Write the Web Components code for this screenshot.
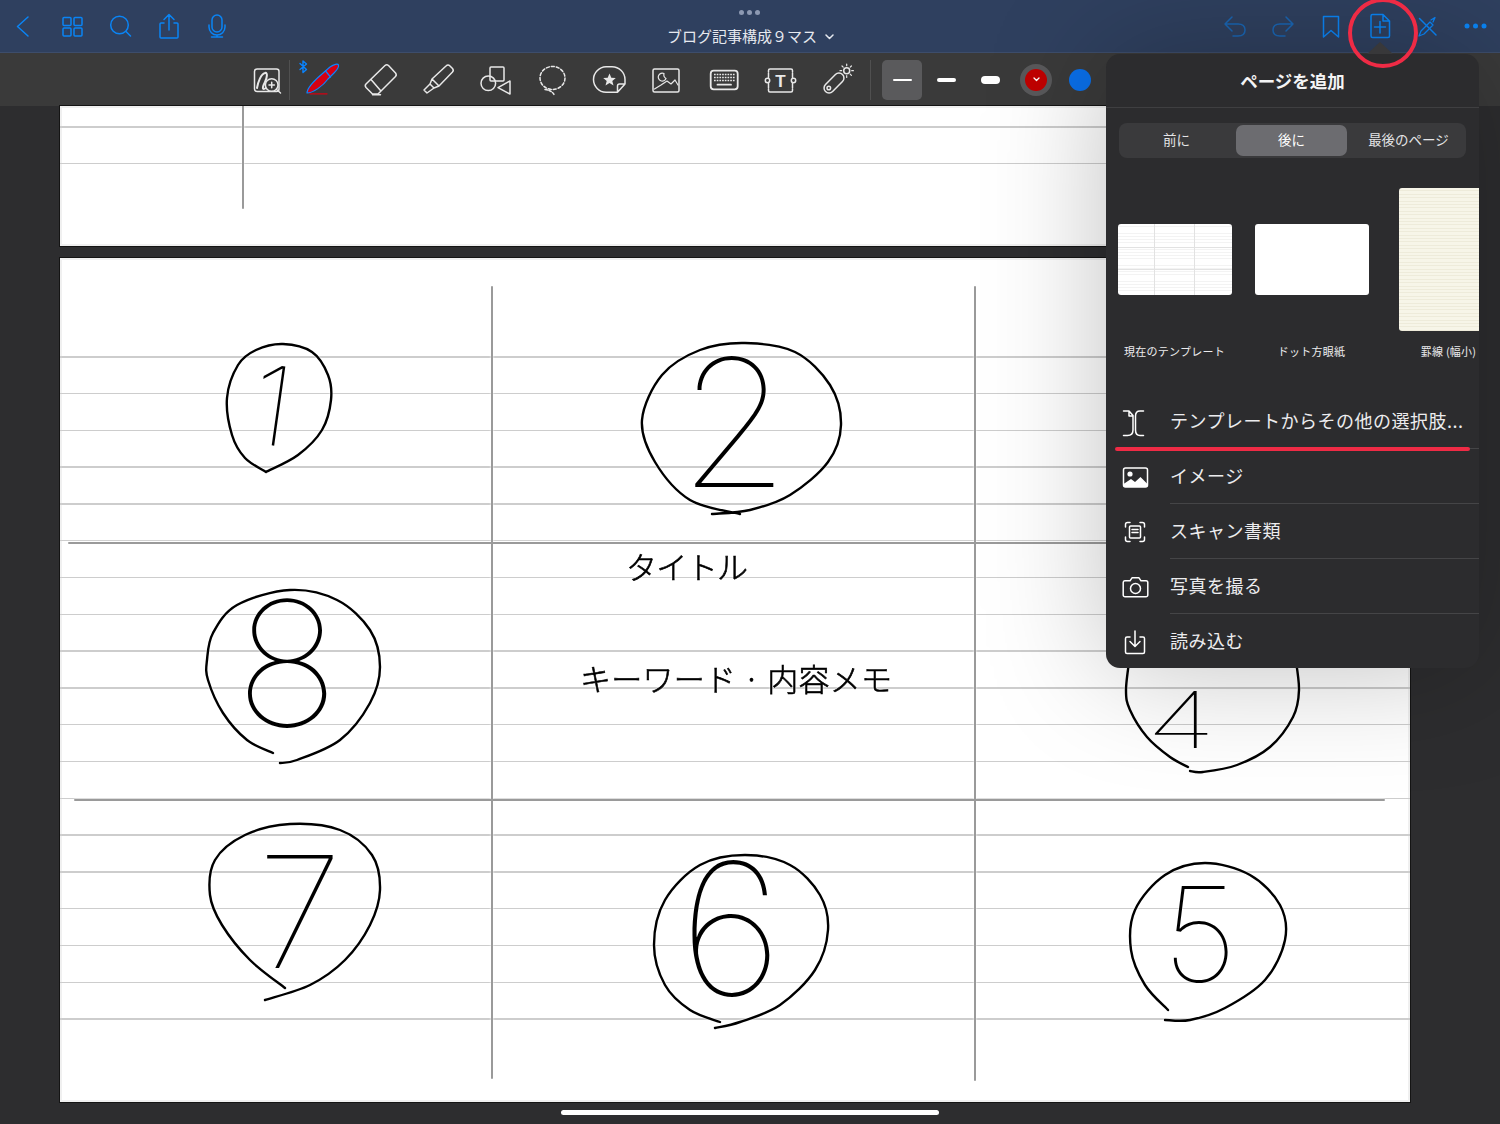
<!DOCTYPE html>
<html lang="ja">
<head>
<meta charset="utf-8">
<title>ブログ記事構成9マス</title>
<style>
  html, body { margin: 0; padding: 0; background: #2d2d2f; }
  body { width: 1500px; height: 1124px; overflow: hidden; font-family: "Noto Sans CJK JP", "Noto Sans", sans-serif; }
</style>
</head>
<body>
<note-app></note-app>
<script>
const ICONS = {
  back: '<path d="M28 17 17.5 26.5 28 36"/>',
  grid: '<rect x="15" y="17.5" width="8" height="8" rx="1"/><rect x="26" y="17.5" width="8" height="8" rx="1"/><rect x="15" y="28" width="8" height="8" rx="1"/><rect x="26" y="28" width="8" height="8" rx="1"/>',
  search: '<circle cx="23.5" cy="25" r="8.8"/><path d="M30 31.5 34.5 36"/>',
  share: '<path d="M20 23h-3a1 1 0 0 0-1 1v13a1 1 0 0 0 1 1h16a1 1 0 0 0 1-1V24a1 1 0 0 0-1-1h-3M25 30V15M20 19.5l5-5 5 5"/>',
  mic: '<rect x="20" y="15" width="10" height="17" rx="5"/><path d="M17 25v2a8 8 0 0 0 16 0v-2M25 35v2M19.5 37h11"/>',
  undo: '<g opacity=".55"><path d="M20 17 13 24 20 31M13 24H26Q33 24 33 30 33 36 26 36H21"/></g>',
  redo: '<g opacity=".55"><path d="M26 17 33 24 26 31M33 24H20Q13 24 13 30 13 36 20 36H25"/></g>',
  bookmark: '<path d="M15.5 16.5H30.5V37L23 30.5 15.5 37Z"/>',
  pageadd: '<path d="M16.5 14.5H27L33.5 21V36a1.5 1.5 0 0 1-1.5 1.5H16.5a1.5 1.5 0 0 1-1.5-1.5V16a1.5 1.5 0 0 1 1.500-1.500ZM27 14.5V21H33.5M24 21.500V33M18.500 27H29.500"/>',
  penx: '<path d="M15.500 18.500 32 35"/><path stroke-width="1.300" d="M15 36l2-5 9-9 3 3-9 9ZM27 20l4-2.500-2 4.500"/>',
  more: '<g fill="currentColor" stroke="none"><circle cx="15" cy="26" r="2.500"/><circle cx="23.500" cy="26" r="2.500"/><circle cx="32" cy="26" r="2.500"/></g>',
  zoomink: '<rect x="8.500" y="9" width="24.500" height="22.500" rx="2.500"/><path stroke-width="2" d="M11 28C12 22 15 14 19 13 22 12 21 18 19 22 17 26 16 29 18 29 20 29 21 26 22 25"/><circle cx="25.700" cy="25" r="6.300" fill="#3a3a3a"/><path d="M23 25h5.400M25.700 22.300v5.400M30.300 29.300 34.500 33"/>',
  pen: '<path fill="#d40012" stroke="#0a84ff" stroke-width="1.200" d="M6 33C6 28 14 20 21 14L29 7C33 4 37 3.500 37.500 5 38 7 36 10 33 13L27 19C22 26 12 33 6 33Z"/><path stroke="#0a84ff" stroke-width="1.200" d="M24.500 11 29.500 17"/><path stroke="#d40012" stroke-width="1.300" d="M9 33.800H26"/><path stroke="#0a84ff" stroke-width="1.400" d="M-1 3.500 5.500 9.500 2 12.500V1L5.500 4-1 9.500"/>',
  eraser: '<path d="M24 5.500Q25.700 4 27.500 5.500L34.500 13Q36 15 34.500 16.500L17 34H11.500L5 27.500Q3.500 25.500 5 24ZM10 19.500 19.500 30.500M11.500 34.800H19.500"/>',
  marker: '<path d="M27 6Q29 4 31 6L33.500 8.500Q35 10.500 33.500 12L20 26 13 19ZM13 19 11 24 15 28 20 26M11 24 5 30 8 33 15 28"/>',
  shapes: '<rect x="14" y="7" width="14" height="14" rx="1"/><circle cx="12.300" cy="23.300" r="7.300"/><path d="M34 21V34L22 27.600Z"/>',
  lasso: '<ellipse cx="20.500" cy="18" rx="12.500" ry="11.500" stroke-dasharray="3 2"/><path stroke-dasharray="2.500 1.500" d="M13 29.500Q20 30.500 22 34.500"/>',
  sticker: '<path d="M17 6.800H23A13 12.800 0 0 1 36 19.600V24L28.500 32.300H17A13 12.800 0 0 1 4.500 19.600 13 12.800 0 0 1 17 6.800ZM36 24H30.500Q28.500 24 28.500 26V32.300"/><path fill="#e8e8e8" stroke="none" d="M20.500 13.500 22.300 17.800 26.800 18.100 23.300 21 24.500 25.500 20.500 23 16.500 25.500 17.700 21 14.200 18.100 18.700 17.800Z"/>',
  photo: '<rect x="7" y="9" width="26" height="23" rx="1.500"/><path stroke-width="1.200" d="M8.500 29 15 25 21 21 25 24 29 20 32 25M18 13.500A4 4 0 1 0 20 18.500 4.500 4.500 0 0 1 18 13.500Z"/>',
  keyboard: '<rect x="6.700" y="10.700" width="27" height="18.600" rx="3" stroke-width="1.800"/><g stroke-linecap="butt"><path stroke-width="1.700" stroke-dasharray="1.700 1" d="M10 14.500H31M10 17.500H31M10 20.500H31"/></g><path stroke-width="1.800" d="M13.500 24.700H27"/>',
  textbox: '<g transform="translate(-1.500 0)"><path d="M9 12V10.500A1.500 1.500 0 0 1 10.500 9H31.500A1.500 1.500 0 0 1 33 10.500V12M33 29V30.500A1.500 1.500 0 0 1 31.500 32H10.500A1.500 1.500 0 0 1 9 30.500V29M9 17.500V13M9 28V23.500M33 17.500V13M33 28V23.500"/><circle cx="8" cy="20.500" r="2.200"/><circle cx="34" cy="20.500" r="2.200"/></g>',
  pointer: '<rect x="4" y="18" width="24" height="10" rx="5" transform="rotate(-45 16 23)"/><circle cx="10.800" cy="28" r="1.800"/><circle cx="28.700" cy="10.700" r="3"/><path stroke-width="1.200" d="M28.700 4V5.700M28.700 15.700V17.400M22 10.700H23.700M33.700 10.700H35.400M24 6 25.200 7.200M32.200 14.200 33.400 15.400M33.400 6 32.200 7.200"/>',
  template: '<path d="M4.500 5H10L14 9.500V24Q14 29.500 8.500 29.500H4.500M10 5V10H14M24.500 5H21Q16.500 5 16.500 10V24Q16.500 29.500 21 29.500H24.500"/>',
  image: '<rect x="4.500" y="7" width="24" height="19" rx="2"/><circle cx="11" cy="13" r="2.600" fill="#fff" stroke="none"/><path fill="#fff" stroke="none" d="M4.500 23 12 18 16 21 21.500 16 28.500 23V24.500A1.500 1.500 0 0 1 27 26H6A1.500 1.500 0 0 1 4.500 24.500Z"/>',
  scan: '<path d="M6.500 11V8.500A2 2 0 0 1 8.500 6.500H11M21 6.500H23.500A2 2 0 0 1 25.500 8.500V11M25.500 21V23.500A2 2 0 0 1 23.500 25.500H21M11 25.500H8.500A2 2 0 0 1 6.500 23.500V21"/><rect x="10.500" y="10" width="11" height="12" rx="1"/><path d="M13 13.500H19M13 16.500H19"/>',
  camera: '<path d="M5.800 9.800H11L13 6.800H20L22 9.800H27A1.800 1.800 0 0 1 28.800 11.600V24A1.800 1.800 0 0 1 27 25.800H6A1.800 1.800 0 0 1 4.200 24V11.600A1.800 1.800 0 0 1 5.800 9.800Z"/><circle cx="16.500" cy="17.500" r="5"/>',
  import: '<path d="M11 11H8A1.500 1.500 0 0 0 6.500 12.500V26A1.500 1.500 0 0 0 8 27.500H24A1.500 1.500 0 0 0 25.500 26V12.500A1.500 1.500 0 0 0 24 11H21M16 5V20M11 15.500 16 20.500 21 15.500"/>'
};

// smooth line through hand-picked points, for the pen circles
function stroke(points) {
  let d = `M${points[0]}`;
  for (let i = 0; i < points.length - 1; i++) {
    const p0 = points[i - 1] || points[i], p1 = points[i], p2 = points[i + 1], p3 = points[i + 2] || p2;
    const c1 = [p1[0] + (p2[0] - p0[0]) / 6, p1[1] + (p2[1] - p0[1]) / 6];
    const c2 = [p2[0] - (p3[0] - p1[0]) / 6, p2[1] - (p3[1] - p1[1]) / 6];
    d += `C${c1} ${c2} ${p2}`;
  }
  return `<path d="${d}"/>`;
}

class NoteIcon extends HTMLElement {
  connectedCallback() {
    const name = this.getAttribute('name');
    const w = this.getAttribute('w') || 40;
    const h = this.getAttribute('h') || 40;
    const sw = this.getAttribute('sw') || 1.5;
    this.attachShadow({ mode: 'open' });
    this.shadowRoot.innerHTML = `
      <style>
        :host { display: block; flex: none; width: ${w}px; height: ${h}px; }
        svg { display: block; overflow: visible; }
        text { font-family: "Liberation Sans", sans-serif; font-weight: 700; font-size: 17px; fill: currentColor; stroke: none; }
      </style>
      <svg width="${w}" height="${h}" viewBox="0 0 ${w} ${h}" fill="none" stroke="currentColor" stroke-width="${sw}"
        stroke-linecap="round" stroke-linejoin="round">${ICONS[name]}${name === 'textbox' ? '<text x="19.500" y="26.500" text-anchor="middle">T</text>' : ''}</svg>`;
  }
}
customElements.define('note-icon', NoteIcon);

class NavBar extends HTMLElement {
  connectedCallback() {
    const slotIcon = n => `<note-icon name="${n}" w="48" h="52"></note-icon>`;
    this.attachShadow({ mode: 'open' });
    this.shadowRoot.innerHTML = `
      <style>
        :host { display: grid; grid-template-columns: 1fr auto 1fr; height: 52px; background: #2f405f;
          border-bottom: 1px solid #3d4d6b; color: #0a84f5; }
        .side { display: flex; }
        .side.right { justify-content: flex-end; }
        .mid { display: flex; flex-direction: column; align-items: center; color: #e6e9ef; }
        .dots { display: flex; gap: 3px; margin-top: 10px; height: 6px; }
        .dots i { width: 5px; height: 5px; border-radius: 50%; background: #8d99b2; }
        .title { display: flex; align-items: center; font-size: 15px; line-height: 22px; margin-top: 9px; padding-left: 1px; }
        .title svg { margin-left: 8px; margin-top: 2px; }
      </style>
      <div class="side">${['back', 'grid', 'search', 'share', 'mic'].map(slotIcon).join('')}</div>
      <div class="mid">
        <div class="dots"><i></i><i></i><i></i></div>
        <div class="title">ブログ記事構成９マス<svg width="9" height="6" viewBox="0 0 9 6" fill="none" stroke="#e6e9ef" stroke-width="1.500" stroke-linecap="round" stroke-linejoin="round"><path d="M1 1 4.500 4.500 8 1"/></svg></div>
      </div>
      <div class="side right">${['undo', 'redo', 'bookmark', 'pageadd', 'penx', 'more'].map(slotIcon).join('')}</div>`;
  }
}
customElements.define('nav-bar', NavBar);

class ToolBar extends HTMLElement {
  connectedCallback() {
    const tool = (name, width) => `<div class="tool" style="width:${width}px"><note-icon name="${name}"></note-icon></div>`;
    this.attachShadow({ mode: 'open' });
    this.shadowRoot.innerHTML = `
      <style>
        :host { display: flex; align-items: center; height: 53px; padding-left: 242px; background: #3a3a3a; color: #e8e8e8; box-sizing: border-box; }
        .tool { display: flex; justify-content: center; align-items: center; flex: none; }
        .sep { width: 1px; height: 40px; background: #505050; flex: none; }
        .line { display: flex; align-items: center; justify-content: center; flex: none; height: 40px; }
        .line.on { background: #5a5a5c; border-radius: 5px; margin-left: 11px; }
        .line i { display: block; width: 19px; background: #fff; border-radius: 4px; }
        .ring { width: 32px; height: 32px; border-radius: 50%; background: #59595b; display: flex; align-items: center; justify-content: center; margin-left: 10px; flex: none; }
        .ring b { width: 22px; height: 22px; border-radius: 50%; background: #c00000; display: flex; align-items: center; justify-content: center; }
        .blue { width: 22px; height: 22px; border-radius: 50%; background: #0a6fe8; margin-left: 17px; flex: none; }
      </style>
      ${tool('zoomink', 47)}<div class="sep"></div>
      ${tool('pen', 62)}${tool('eraser', 58)}${tool('marker', 58)}${tool('shapes', 56)}${tool('lasso', 56)}
      ${tool('sticker', 57)}${tool('photo', 58)}${tool('keyboard', 57)}${tool('textbox', 57)}${tool('pointer', 58)}
      <div class="sep" style="margin-left:3px"></div>
      <div class="line on" style="width:40px"><i style="height:2px"></i></div>
      <div class="line" style="width:48px"><i style="height:4px"></i></div>
      <div class="line" style="width:40px"><i style="height:8px"></i></div>
      <div class="ring"><b><svg width="7" height="5" viewBox="0 0 7 5" fill="none" stroke="#fff" stroke-width="1.300" stroke-linecap="round" stroke-linejoin="round"><path d="M1 1 3.500 3.500 6 1"/></svg></b></div>
      <div class="blue"></div>`;
  }
}
customElements.define('tool-bar', ToolBar);

class NotePage extends HTMLElement {
  connectedCallback() {
    const top = this.getAttribute('rule-top');
    const count = this.getAttribute('rule-count');
    this.attachShadow({ mode: 'open' });
    this.shadowRoot.innerHTML = `
      <style>
        :host { display: block; position: relative; width: 1350px; flex: none; background: #fff;
          box-shadow: 0 0 0 1px #141414, inset 0 0 0 2px #f0f0f0; overflow: hidden; }
        .rules { margin-top: ${top}px; height: ${(count - 1) * 36.8 + 2}px;
          background: repeating-linear-gradient(to bottom, #cdcdcd 0, #cdcdcd 1.500px, transparent 1.500px, transparent 36.800px); }
      </style>
      <div class="rules"></div>
      <slot></slot>`;
  }
}
customElements.define('note-page', NotePage);

class SegPicker extends HTMLElement {
  connectedCallback() {
    this.attachShadow({ mode: 'open' });
    this.shadowRoot.innerHTML = `
      <style>
        :host { display: grid; grid-template-columns: 115px 111px 1fr; height: 35px; padding: 2px; box-sizing: border-box; margin: 15px 13px 0;
          background: #3a3a3c; border-radius: 8px; font-size: 13.500px; color: #e4e4e6; }
        div { display: flex; align-items: center; justify-content: center; border-radius: 7px; padding-bottom: 3px; box-sizing: border-box; }
        .on { background: #6c6c70; color: #fff; }
      </style>
      <div style="padding-right:4px">前に</div><div class="on">後に</div><div style="padding-left:6px">最後のページ</div>`;
  }
}
customElements.define('seg-picker', SegPicker);

class TemplateThumb extends HTMLElement {
  connectedCallback() {
    this.attachShadow({ mode: 'open' });
    this.shadowRoot.innerHTML = `
      <style>
        :host { display: flex; flex-direction: column; align-items: center; flex: none; width: 137px; }
        .box { height: 143px; display: flex; align-items: center; }
        .label { margin-top: 10px; font-size: 11px; letter-spacing: .25px; line-height: 20px; color: #ececee; white-space: nowrap; }
      </style>
      <div class="box"><slot></slot></div>
      <div class="label">${this.getAttribute('label')}</div>`;
  }
}
customElements.define('template-thumb', TemplateThumb);

class MenuRow extends HTMLElement {
  connectedCallback() {
    const last = this.hasAttribute('last');
    this.attachShadow({ mode: 'open' });
    this.shadowRoot.innerHTML = `
      <style>
        :host { display: flex; align-items: stretch; height: 55px; color: #fff; }
        .ic { width: 64px; flex: none; display: flex; align-items: center; padding-left: 13px; box-sizing: border-box; }
        .tx { flex: 1; display: flex; align-items: center; font-size: 18px; letter-spacing: .5px; color: #ececee; white-space: nowrap; box-sizing: border-box;
          padding-bottom: 2px; border-bottom: 1px solid ${last ? 'transparent' : '#454547'}; }
      </style>
      <div class="ic"><note-icon name="${this.getAttribute('icon')}" w="32" h="32"></note-icon></div>
      <div class="tx">${this.getAttribute('label')}</div>`;
  }
}
customElements.define('menu-row', MenuRow);

class AddPagePopover extends HTMLElement {
  connectedCallback() {
    this.attachShadow({ mode: 'open' });
    this.shadowRoot.innerHTML = `
      <style>
        :host { position: absolute; left: 1106px; top: 54px; width: 373px; height: 614px; background: #2c2c2e; border-radius: 14px;
          box-shadow: 0 0 120px rgba(0,0,0,.25); display: block; }
        .arrow { position: absolute; left: 261px; top: -12px; width: 0; height: 0;
          border-left: 13px solid transparent; border-right: 13px solid transparent; border-bottom: 12px solid #38383a; }
        .head { height: 54px; box-sizing: border-box; border-bottom: 1px solid #3f3f41; display: flex; align-items: center; justify-content: center;
          font-size: 17.500px; font-weight: 700; color: #f4f4f5; }
        .strip { display: flex; margin-top: 30px; overflow: hidden; height: 206px; }
        .t { background: #fff; border-radius: 3px; box-sizing: border-box; }
        .t1 { width: 114px; height: 71px;
          background: linear-gradient(#e2e2e2,#e2e2e2) 36px 0/1px 100% no-repeat, linear-gradient(#e2e2e2,#e2e2e2) 76px 0/1px 100% no-repeat,
            linear-gradient(#e2e2e2,#e2e2e2) 0 23px/100% 1px no-repeat, linear-gradient(#e2e2e2,#e2e2e2) 0 45px/100% 1px no-repeat,
            repeating-linear-gradient(#fff 0, #fff 2.400px, #f3f3f3 2.400px, #f3f3f3 3.200px); }
        .t2 { width: 114px; height: 71px; }
        .t3 { width: 100px; height: 143px; background: repeating-linear-gradient(#f7f5e8 0, #f7f5e8 2.400px, #eeebda 2.400px, #eeebda 3.400px); }
      </style>
      <div class="arrow"></div>
      <div class="head">ページを追加</div>
      <seg-picker></seg-picker>
      <div class="strip">
        <template-thumb label="現在のテンプレート"><div class="t t1"></div></template-thumb>
        <template-thumb label="ドット方眼紙"><div class="t t2"></div></template-thumb>
        <template-thumb label="罫線 (幅小)"><div class="t t3"></div></template-thumb>
      </div>
      <div class="rows">
        <menu-row icon="template" label="テンプレートからその他の選択肢..."></menu-row>
        <menu-row icon="image" label="イメージ"></menu-row>
        <menu-row icon="scan" label="スキャン書類"></menu-row>
        <menu-row icon="camera" label="写真を撮る"></menu-row>
        <menu-row icon="import" label="読み込む" last></menu-row>
      </div>`;
  }
}
customElements.define('add-page-popover', AddPagePopover);

class NoteApp extends HTMLElement {
  connectedCallback() {
    this.attachShadow({ mode: 'open' });
    this.shadowRoot.innerHTML = `
      <style>
        :host { display: block; position: relative; width: 1500px; height: 1124px; overflow: hidden; background: #2d2d2f; }
        .canvas { display: flex; flex-direction: column; gap: 12px; padding-left: 60px; }
        .ink { position: absolute; left: 0; top: 0; filter: drop-shadow(0 0 1px #fff); }
        .ink path { fill: none; stroke: #000; stroke-width: 2.400; stroke-linecap: round; stroke-linejoin: round; }
        .ink .grid { stroke: #9a9a9a; stroke-width: 2; }
        .ink text { fill: #000; font-family: Inter, "Noto Sans", sans-serif; font-weight: 100; }
        .ink text.ja { font-family: "Noto Sans CJK JP", sans-serif; font-size: 31px; font-weight: 300; stroke: #000; stroke-width: .600; }
        .ring { position: absolute; left: 1348px; top: -2px; width: 70px; height: 70px; box-sizing: border-box; border: 4.500px solid #ef2b45; border-radius: 50%; }
        .under { position: absolute; left: 1115px; top: 447px; width: 355px; height: 4px; background: #ef2b45; border-radius: 2px; }
        .home { position: absolute; left: 561px; top: 1110px; width: 378px; height: 5px; background: #fff; border-radius: 3px; }
      </style>
      <nav-bar></nav-bar>
      <tool-bar></tool-bar>
      <div class="canvas">
        <note-page style="height:140px" rule-top="20" rule-count="2">
          <svg class="ink" width="1350" height="140" viewBox="60 106 1350 140"><path class="grid" d="M243 106V208"/></svg>
        </note-page>
        <note-page style="height:844px" rule-top="98" rule-count="19">
          <svg class="ink" width="1350" height="844" viewBox="60 258 1350 844">
            <path class="grid" d="M492 287V1078M975 287V1080M69 543H1400M75 800H1384"/>

            ${stroke([[266, 472], [245, 458], [232, 435], [227, 398], [238, 365], [256, 350], [283, 344], [312, 352], [328, 375], [331, 400], [322, 430], [298, 455], [266, 472]])}
            <text x="272" y="445" font-size="110" text-anchor="middle" transform="rotate(8 272 405)">1</text>

            ${stroke([[740, 514], [690, 500], [655, 462], [642, 420], [662, 375], [700, 350], [745, 343], [795, 352], [830, 385], [841, 425], [828, 462], [790, 495], [750, 510], [712, 514]])}
            <text x="734" y="487" font-size="178" text-anchor="middle">2</text>

            ${stroke([[273, 753], [247, 740], [223, 713], [208, 680], [207, 660], [213, 633], [237, 605], [290, 590], [337, 600], [370, 630], [380, 667], [370, 703], [340, 740], [297, 760], [280, 763]])}
            <text x="287" y="726" font-size="173" text-anchor="middle">8</text>

            <text class="ja" x="626" y="579" textLength="122">タイトル</text>
            <text class="ja" x="580" y="691" textLength="312">キーワード · 内容メモ</text>

            ${stroke([[1130, 655], [1126, 690], [1130, 710], [1147, 737], [1170, 757], [1188, 767]])}
            ${stroke([[1295, 655], [1299, 690], [1293, 717], [1270, 747], [1237, 765], [1203, 772], [1190, 771]])}
            <text transform="translate(1181 748) scale(1.500 1)" font-size="78" text-anchor="middle">4</text>

            ${stroke([[285, 988], [250, 960], [222, 925], [210, 895], [215, 860], [245, 835], [290, 824], [340, 830], [372, 855], [380, 890], [370, 925], [345, 960], [310, 985], [265, 1000]])}
            <text x="300" y="968" font-size="155" text-anchor="middle">7</text>

            ${stroke([[720, 1022], [690, 1010], [665, 985], [654, 945], [665, 900], [700, 865], [745, 855], [790, 865], [820, 895], [828, 930], [815, 970], [780, 1005], [740, 1022], [715, 1028]])}
            <text x="731" y="995" font-size="183" text-anchor="middle">6</text>

            ${stroke([[1168, 1010], [1145, 985], [1131, 950], [1135, 910], [1165, 875], [1205, 863], [1250, 875], [1280, 905], [1285, 940], [1265, 980], [1225, 1008], [1190, 1020], [1165, 1020]])}
            <text x="1200" y="982" font-size="132" text-anchor="middle">5</text>
          </svg>
        </note-page>
      </div>
      <add-page-popover></add-page-popover>
      <div class="ring"></div>
      <div class="under"></div>
      <div class="home"></div>`;
  }
}
customElements.define('note-app', NoteApp);
</script>
</body>
</html>
